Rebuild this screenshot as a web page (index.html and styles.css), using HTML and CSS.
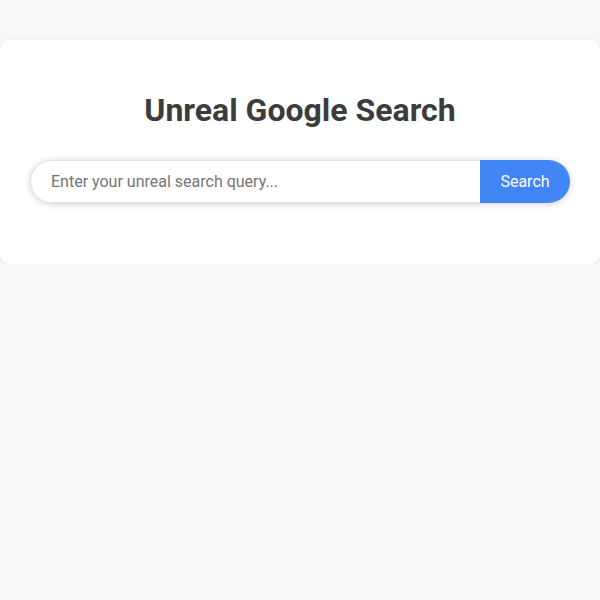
FILE: index.html
```html
<!DOCTYPE html>
<html lang="en">
<head>
<meta charset="utf-8">
<title>Unreal Google Search</title>
<link rel="stylesheet" href="styles.css">
</head>
<body>
<div class="card">
  <h1 class="title">Unreal Google Search</h1>
  <form class="search">
    <input class="search-input" type="text" placeholder="Enter your unreal search query...">
    <button class="search-btn" type="button">Search</button>
  </form>
  <div class="results"></div>
</div>
</body>
</html>
```

FILE: styles.css
```css
html, body {
  margin: 0;
  padding: 0;
}
body {
  background: #f8f9fa;
  font-family: Roboto, "Liberation Sans", Arial, sans-serif;
  color: #333;
}
.card {
  background: #fff;
  margin: 40px 0 0;
  padding: 30px 30px 61px;
  border-radius: 10px;
  box-shadow: 0 2px 10px rgba(0, 0, 0, 0.08);
}
.title {
  margin: 21px 0 31px;
  text-align: center;
  font-size: 32px;
  line-height: 38px;
  font-weight: 700;
  color: #3c3c3c;
}
.search {
  display: flex;
  height: 43px;
  border-radius: 22px;
  box-shadow: 0 1px 6px rgba(32, 33, 36, 0.22);
  margin: 0;
}
.search-input {
  flex: 1;
  min-width: 0;
  border: 1px solid #dfe1e5;
  border-right: none;
  border-radius: 22px 0 0 22px;
  padding: 0 20px;
  font-family: inherit;
  font-size: 16px;
  color: #333;
  outline: none;
  background: #fff;
}
.search-input::placeholder {
  color: #757575;
}
.search-btn {
  width: 90px;
  border: none;
  border-radius: 0 22px 22px 0;
  background: #4285f4;
  color: #fff;
  font-family: inherit;
  font-size: 16px;
  cursor: pointer;
}
```
